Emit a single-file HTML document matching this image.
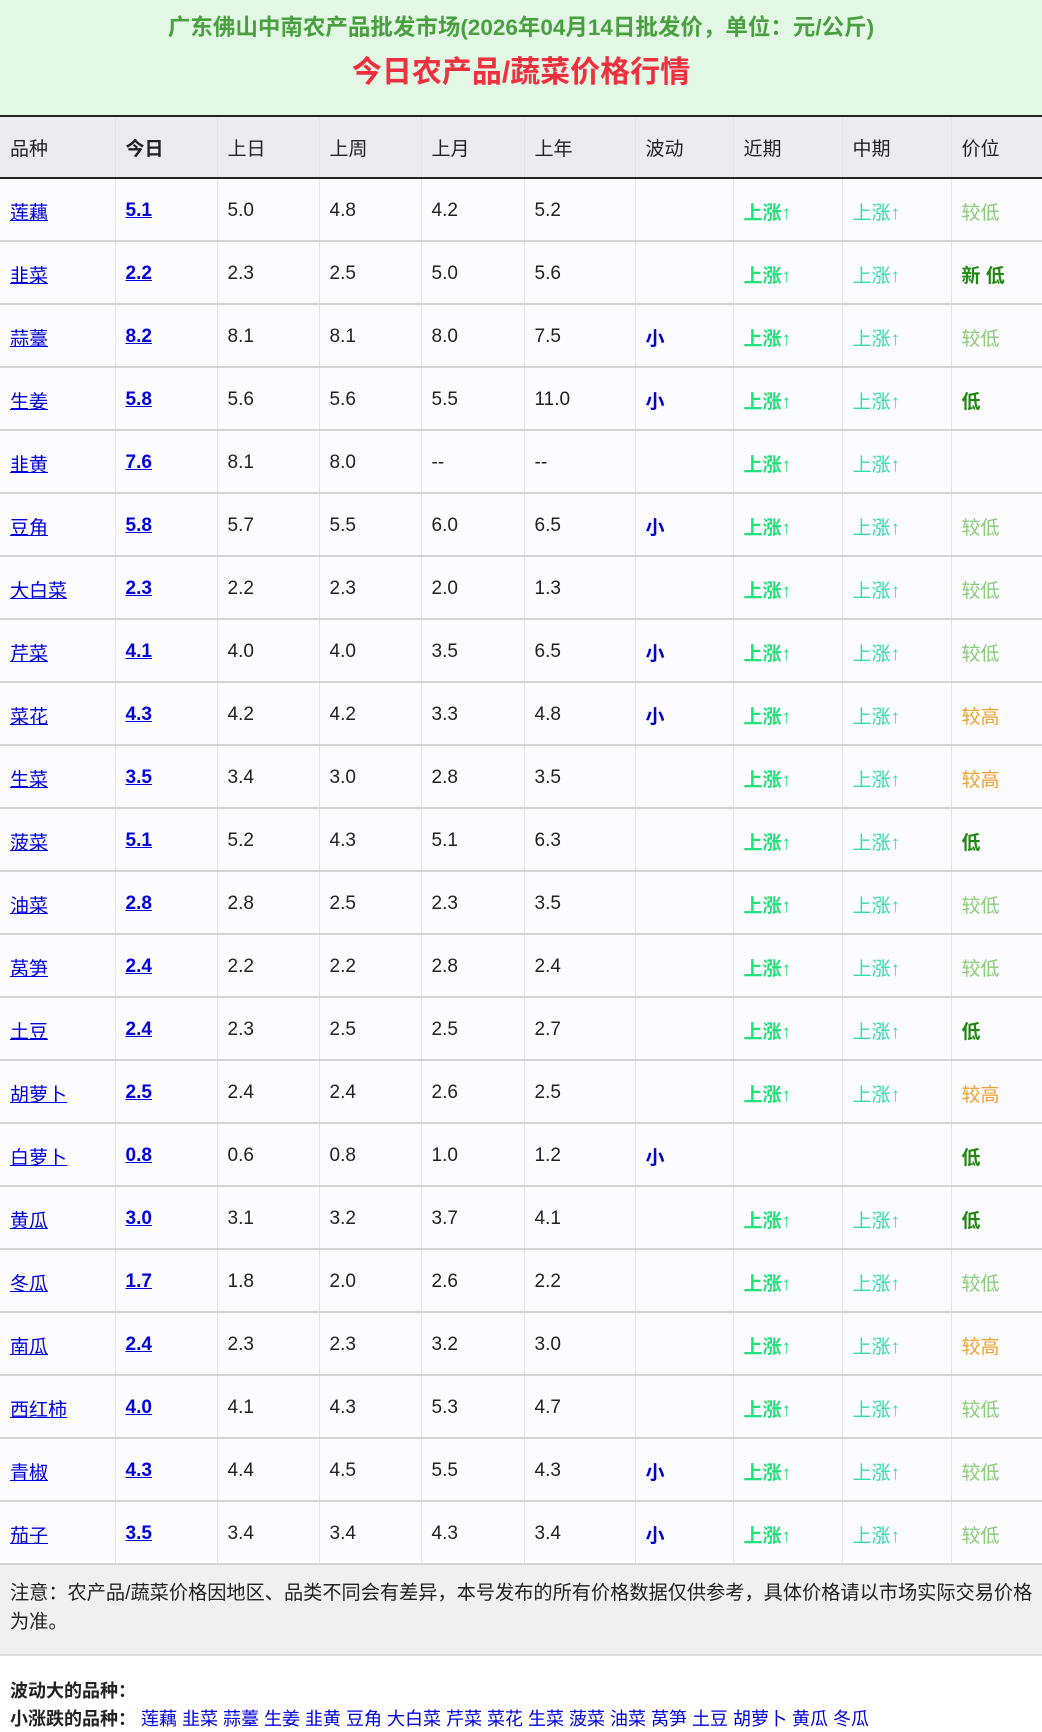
<!DOCTYPE html>
<html><head><meta charset="utf-8"><style>
*{margin:0;padding:0;box-sizing:border-box}
body{width:1042px;height:1710px;overflow:hidden;background:#fff;font-family:"Liberation Sans","Noto Sans CJK SC",sans-serif;color:#222}
.hd{height:115px;background:#e2f7e4;text-align:center}
.t1{padding-top:13px;font-size:22.5px;font-weight:bold;color:#4aa040;line-height:30px}
.t2{margin-top:12px;font-size:30px;font-weight:bold;color:#f0303f;line-height:36px}
table{border-collapse:collapse;width:1042px;table-layout:fixed}
th,td{text-align:left;padding:0 0 0 10px;font-size:19px;font-weight:normal;border-right:1px solid #e4e4e8;white-space:nowrap}
th:last-child,td:last-child{border-right:none}
thead tr{height:62px;background:#ecebef;border-top:2px solid #222;border-bottom:2px solid #222}
tbody tr{height:63px;background:#fcfbfe;border-bottom:2px solid #d4d4d8}
tbody td{padding-top:3px}
a{color:#0000dd;text-decoration:underline}
.j{font-weight:bold}
.x{color:#0000cc;font-weight:bold}
.n{color:#22e07a;font-weight:bold}
.m{color:#33ddaa}
.l{color:#88cc77}
.d{color:#228811;font-weight:bold}
.h{color:#f0a030}
.note{background:#f0f0f0;height:89px;padding:14px 6px 0 10px;font-size:19.2px;line-height:29px;color:#222}
.b{padding:20px 10px 0;border-top:2px solid #ddd;font-size:18px;font-weight:bold;line-height:30px}
.c{font-size:18px;padding:0 10px;line-height:26px;white-space:nowrap}
.c span{color:#0000dd}
</style></head><body>
<div class="hd"><div class="t1">广东佛山中南农产品批发市场(2026年04月14日批发价，单位：元/公斤)</div><div class="t2">今日农产品/蔬菜价格行情</div></div>
<table>
<colgroup><col style="width:115px"><col style="width:102px"><col style="width:102px"><col style="width:102px"><col style="width:103px"><col style="width:111px"><col style="width:98px"><col style="width:109px"><col style="width:109px"><col style="width:91px"></colgroup>
<thead><tr><th>品种</th><th style="font-weight:bold">今日</th><th>上日</th><th>上周</th><th>上月</th><th>上年</th><th>波动</th><th>近期</th><th>中期</th><th>价位</th></tr></thead>
<tbody id="tb"></tbody></table>
<div class="note">注意：农产品/蔬菜价格因地区、品类不同会有差异，本号发布的所有价格数据仅供参考，具体价格请以市场实际交易价格为准。</div>
<div class="b">波动大的品种：</div>
<div class="c"><b>小涨跌的品种：</b> <span>莲藕 韭菜 蒜薹 生姜 韭黄 豆角 大白菜 芹菜 菜花 生菜 菠菜 油菜 莴笋 土豆 胡萝卜 黄瓜 冬瓜</span></div>
<script>
var d=[["莲藕","5.1","5.0","4.8","4.2","5.2","","较低"],["韭菜","2.2","2.3","2.5","5.0","5.6","","新 低"],["蒜薹","8.2","8.1","8.1","8.0","7.5","小","较低"],["生姜","5.8","5.6","5.6","5.5","11.0","小","低"],["韭黄","7.6","8.1","8.0","--","--","",""],["豆角","5.8","5.7","5.5","6.0","6.5","小","较低"],["大白菜","2.3","2.2","2.3","2.0","1.3","","较低"],["芹菜","4.1","4.0","4.0","3.5","6.5","小","较低"],["菜花","4.3","4.2","4.2","3.3","4.8","小","较高"],["生菜","3.5","3.4","3.0","2.8","3.5","","较高"],["菠菜","5.1","5.2","4.3","5.1","6.3","","低"],["油菜","2.8","2.8","2.5","2.3","3.5","","较低"],["莴笋","2.4","2.2","2.2","2.8","2.4","","较低"],["土豆","2.4","2.3","2.5","2.5","2.7","","低"],["胡萝卜","2.5","2.4","2.4","2.6","2.5","","较高"],["白萝卜","0.8","0.6","0.8","1.0","1.2","小","低",1],["黄瓜","3.0","3.1","3.2","3.7","4.1","","低"],["冬瓜","1.7","1.8","2.0","2.6","2.2","","较低"],["南瓜","2.4","2.3","2.3","3.2","3.0","","较高"],["西红柿","4.0","4.1","4.3","5.3","4.7","","较低"],["青椒","4.3","4.4","4.5","5.5","4.3","小","较低"],["茄子","3.5","3.4","3.4","4.3","3.4","小","较低"]];
var h="";d.forEach(function(r){var pc=r[7]=="较低"?"l":r[7]=="较高"?"h":"d";
h+="<tr><td><a>"+r[0]+"</a></td><td><a class='j'>"+r[1]+"</a></td><td>"+r[2]+"</td><td>"+r[3]+"</td><td>"+r[4]+"</td><td>"+r[5]+"</td><td class='x'>"+r[6]+"</td><td class='n'>"+(r[8]?"":"上涨↑")+"</td><td class='m'>"+(r[8]?"":"上涨↑")+"</td><td class='"+pc+"'>"+r[7]+"</td></tr>";});
document.getElementById("tb").innerHTML=h;
</script>
</body></html>
